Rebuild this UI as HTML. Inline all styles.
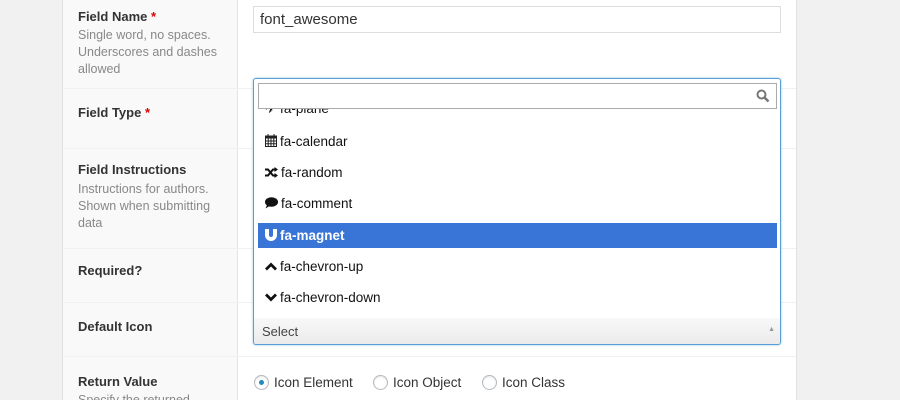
<!DOCTYPE html>
<html style="overflow:hidden;height:400px"><head><style>
*{margin:0;padding:0;box-sizing:border-box}
body{width:900px;height:400px;overflow:hidden;background:#f1f1f1;font-family:"Liberation Sans",sans-serif;position:relative}
.panel{position:absolute;left:62px;top:-2px;width:735px;height:403px;background:#fff;border:1px solid #e1e1e1}
.lab{position:absolute;left:63px;width:175px;background:#f9f9f9;border-right:1px solid #e4e4e4}
.row{position:absolute;left:63px;width:733px;border-top:1px solid #f1f1f1}
.t{position:absolute;left:78px;font-size:13px;font-weight:bold;color:#333}
.t b{color:#dd0000}
.d{position:absolute;left:78px;font-size:12.5px;color:#888;line-height:17px}
.inp{position:absolute;left:253px;top:6px;width:528px;height:27px;border:1px solid #ddd;font-size:15px;color:#333;padding:4px 6px}
.dd{position:absolute;left:253px;top:78px;width:528px;height:267px;border:1px solid #5b9dd9;border-radius:3px;background:#fff;overflow:hidden;box-shadow:0 0 2px rgba(30,140,190,.5)}
.srch{position:absolute;left:4px;top:4px;width:519px;height:26px;border:1px solid #aaa;background:#fff}
.it{position:absolute;left:4px;width:519px;height:25px;font-size:13.5px;color:#111;padding:4px 7px;line-height:17px}
.it svg{vertical-align:-1px;margin-right:3px}
.sel{background:#3875d7;color:#fff;font-weight:bold}
.bar{position:absolute;left:0;top:239px;width:528px;height:28px;background:linear-gradient(#f8f8f8,#eaeaea);font-size:13px;color:#444;padding:6px 8px}
.rad{position:absolute;top:375px;font-size:13.5px;color:#333}
.rad i{display:inline-block;width:15px;height:15px;border:1px solid #b4b9be;border-radius:50%;vertical-align:-3px;margin-right:5px;position:relative;box-shadow:inset 0 1px 2px rgba(0,0,0,.1)}
.rad i.on:after{content:"";position:absolute;left:4px;top:4px;width:5px;height:5px;border-radius:50%;background:#1e8cbe}
</style></head><body>
<div class="panel"></div>
<div class="lab" style="top:0;height:400px"></div>
<div class="row" style="top:88px"></div>
<div class="row" style="top:148px"></div>
<div class="row" style="top:248px"></div>
<div class="row" style="top:302px"></div>
<div class="row" style="top:356px"></div>
<div class="t" style="top:9px">Field Name <b>*</b></div>
<div class="d" style="top:27px">Single word, no spaces.<br>Underscores and dashes<br>allowed</div>
<div class="t" style="top:105px">Field Type <b>*</b></div>
<div class="t" style="top:162px">Field Instructions</div>
<div class="d" style="top:181px">Instructions for authors.<br>Shown when submitting<br>data</div>
<div class="t" style="top:263px">Required?</div>
<div class="t" style="top:319px">Default Icon</div>
<div class="t" style="top:374px">Return Value</div>
<div class="d" style="top:392px">Specify the returned</div>
<div class="inp">font_awesome</div>
<div class="dd">
 <div class="it" style="top:17px">✈ fa-plane</div>
 <div class="srch"><svg style="position:absolute;right:6px;top:5px" width="14" height="14" viewBox="0 0 14 14"><circle cx="5.5" cy="5.5" r="4" fill="none" stroke="#777" stroke-width="2"/><path d="M8.5 8.5L12.5 12.5" stroke="#777" stroke-width="2.5"/></svg></div>
 <div class="it" style="top:50px"><svg width="12" height="13" viewBox="0 0 12 13"><rect x="0.5" y="2" width="11" height="10.5" fill="none" stroke="#222"/><rect x="0.5" y="2" width="11" height="2.5" fill="#222"/><path d="M3 0v3M9 0v3M0 7h12M0 9.8h12M3.2 4v9M6 4v9M8.8 4v9" stroke="#222"/></svg>fa-calendar</div>
 <div class="it" style="top:81px"><svg width="13" height="11" viewBox="0 0 13 11"><path d="M0 2.5h3l5 6h2M0 8.5h3l5-6h2" fill="none" stroke="#111" stroke-width="2"/><path d="M9.5 0l3.5 2.5-3.5 2.5zM9.5 6l3.5 2.5-3.5 2.5z" fill="#111"/></svg>fa-random</div>
 <div class="it" style="top:112px"><svg width="13" height="12" viewBox="0 0 13 12"><ellipse cx="6.5" cy="5" rx="6.5" ry="4.8" fill="#111"/><path d="M2 8l-1.5 3.5 4-2.5z" fill="#111"/></svg>fa-comment</div>
 <div class="it sel" style="top:144px"><svg width="12" height="12" viewBox="0 0 12 12"><path d="M0 0h4v6a2 2 0 0 0 4 0V0h4v6a6 6 0 0 1-12 0z" fill="#fff"/></svg>fa-magnet</div>
 <div class="it" style="top:175px"><svg width="12" height="9" viewBox="0 0 12 9" style="vertical-align:0"><path d="M1 7.5l5-5 5 5" fill="none" stroke="#111" stroke-width="2.8"/></svg>fa-chevron-up</div>
 <div class="it" style="top:206px"><svg width="12" height="9" viewBox="0 0 12 9" style="vertical-align:0"><path d="M1 1.5l5 5 5-5" fill="none" stroke="#111" stroke-width="2.8"/></svg>fa-chevron-down</div>
 <div class="bar">Select<span style="position:absolute;right:7px;top:8px;font-size:7px;color:#999">▲</span></div>
</div>
<div class="rad" style="left:254px"><i class="on"></i>Icon Element</div>
<div class="rad" style="left:373px"><i></i>Icon Object</div>
<div class="rad" style="left:482px"><i></i>Icon Class</div>
</body></html>
